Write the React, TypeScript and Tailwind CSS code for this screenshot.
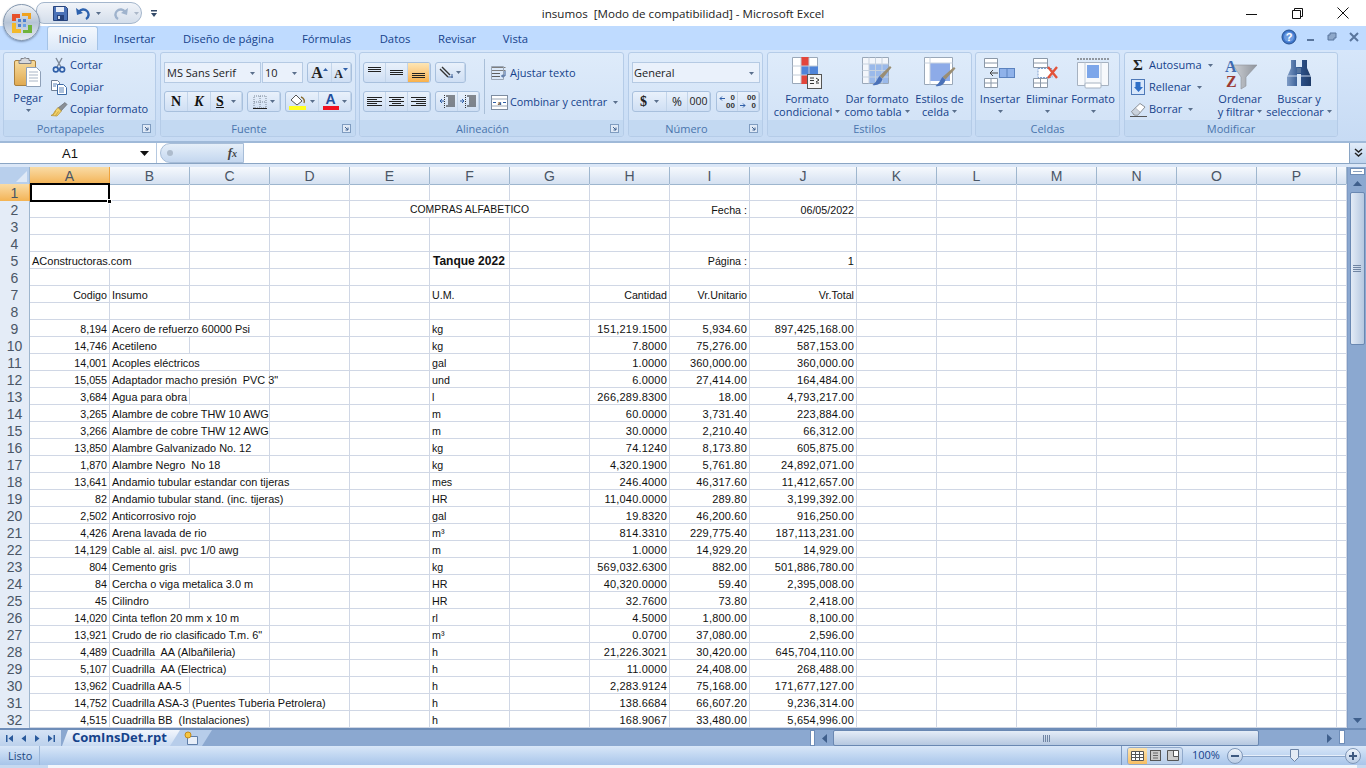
import React from 'react';

const UI = "font-['Open_Sans','Noto_Sans',sans-serif]";
const CELL = "font-['Liberation_Sans',Arial,sans-serif]";

type DataRow = { n: number; a: string; b: string; span: 1 | 2 | 3; f: string; h: string; i: string; j: string };

const raw: [string, string, 1 | 2 | 3, string, string, string, string][] = [
  ['8,194', 'Acero de refuerzo 60000 Psi', 2, 'kg', '151,219.1500', '5,934.60', '897,425,168.00'],
  ['14,746', 'Acetileno', 1, 'kg', '7.8000', '75,276.00', '587,153.00'],
  ['14,001', 'Acoples eléctricos', 2, 'gal', '1.0000', '360,000.00', '360,000.00'],
  ['15,055', 'Adaptador macho presión  PVC 3"', 2, 'und', '6.0000', '27,414.00', '164,484.00'],
  ['3,684', 'Agua para obra', 1, 'l', '266,289.8300', '18.00', '4,793,217.00'],
  ['3,265', 'Alambre de cobre THW 10 AWG', 2, 'm', '60.0000', '3,731.40', '223,884.00'],
  ['3,266', 'Alambre de cobre THW 12 AWG', 2, 'm', '30.0000', '2,210.40', '66,312.00'],
  ['13,850', 'Alambre Galvanizado No. 12', 2, 'kg', '74.1240', '8,173.80', '605,875.00'],
  ['1,870', 'Alambre Negro  No 18', 2, 'kg', '4,320.1900', '5,761.80', '24,892,071.00'],
  ['13,641', 'Andamio tubular estandar con tijeras', 3, 'mes', '246.4000', '46,317.60', '11,412,657.00'],
  ['82', 'Andamio tubular stand. (inc. tijeras)', 3, 'HR', '11,040.0000', '289.80', '3,199,392.00'],
  ['2,502', 'Anticorrosivo rojo', 2, 'gal', '19.8320', '46,200.60', '916,250.00'],
  ['4,426', 'Arena lavada de rio', 2, 'm³', '814.3310', '229,775.40', '187,113,231.00'],
  ['14,129', 'Cable al. aisl. pvc 1/0 awg', 2, 'm', '1.0000', '14,929.20', '14,929.00'],
  ['804', 'Cemento gris', 1, 'kg', '569,032.6300', '882.00', '501,886,780.00'],
  ['84', 'Cercha o viga metalica 3.0 m', 2, 'HR', '40,320.0000', '59.40', '2,395,008.00'],
  ['45', 'Cilindro', 1, 'HR', '32.7600', '73.80', '2,418.00'],
  ['14,020', 'Cinta teflon 20 mm x 10 m', 2, 'rl', '4.5000', '1,800.00', '8,100.00'],
  ['13,921', 'Crudo de rio clasificado T.m. 6"', 2, 'm³', '0.0700', '37,080.00', '2,596.00'],
  ['4,489', 'Cuadrilla  AA (Albañileria)', 2, 'h', '21,226.3021', '30,420.00', '645,704,110.00'],
  ['5,107', 'Cuadrilla  AA (Electrica)', 2, 'h', '11.0000', '24,408.00', '268,488.00'],
  ['13,962', 'Cuadrilla AA-5', 1, 'h', '2,283.9124', '75,168.00', '171,677,127.00'],
  ['14,752', 'Cuadrilla ASA-3 (Puentes Tuberia Petrolera)', 3, 'h', '138.6684', '66,607.20', '9,236,314.00'],
  ['4,515', 'Cuadrilla BB  (Instalaciones)', 2, 'h', '168.9067', '33,480.00', '5,654,996.00'],
];
const rows: DataRow[] = raw.map((r, idx) => ({ n: idx + 9, a: r[0], b: r[1], span: r[2], f: r[3], h: r[4], i: r[5], j: r[6] }));
const letters = ['A', 'B', 'C', 'D', 'E', 'F', 'G', 'H', 'I', 'J', 'K', 'L', 'M', 'N', 'O', 'P', ''];
const GRID = 'grid grid-cols-[30px_repeat(9,80px)_107px_repeat(6,80px)_10px] h-[17px]';
const LINE = 'border-r border-b border-[#d0d7e5] h-[17px] min-w-0';
const TXT = CELL + ' pt-[1px] leading-[16px] text-[#111] whitespace-nowrap';

function Caret({ className = '' }: { className?: string }) {
  return <svg width="5" height="3" viewBox="0 0 5 3" className={'shrink-0 ' + className}><path d="M0 0h5L2.5 3z" fill="#5a6f8c" /></svg>;
}

function Group({ title, w, launcher, children }: { title: string; w: string; launcher?: boolean; children: React.ReactNode }) {
  return (
    <section className={w + ' h-[85px] flex flex-col rounded-[3px] border border-[#b5cce8] bg-gradient-to-b from-[#deebfa] to-[#d0e1f6] overflow-hidden shrink-0'}>
      <div className="h-[67px] flex">{children}</div>
      <div className={'h-[16px] bg-[#c3d9f2] flex items-center relative ' + (launcher ? 'pr-[18px]' : '')}>
        <span className={UI + ' w-full text-center text-[11px] leading-[16px] pt-[1px] text-[#4a75ad]'}>{title}</span>
        {launcher && (
          <svg width="9" height="9" viewBox="0 0 9 9" className="absolute right-[4px] top-[4px]"><rect x=".5" y=".5" width="8" height="8" fill="#dfe9f6" stroke="#7f9cc0" /><path d="M3 3l3 3M6 3.5V6H3.5" stroke="#3f618f" fill="none" /></svg>
        )}
      </div>
    </section>
  );
}

function SmallRow({ icon, label, caret }: { icon: React.ReactNode; label: string; caret?: boolean }) {
  return (
    <div className="h-[22px] flex items-center">
      <span className="w-[18px] h-[16px] flex items-center justify-center shrink-0">{icon}</span>
      <span className={UI + ' ml-[2px] text-[11px] text-[#15428b] whitespace-nowrap'}>{label}</span>
      {caret && <Caret className="ml-[6px]" />}
    </div>
  );
}

function Large({ w, icon, l1, l2 }: { w: string; icon: React.ReactNode; l1: string; l2?: string }) {
  return (
    <div className={w + ' flex flex-col items-center shrink-0'}>
      <div className="h-[38px] flex items-center justify-center mt-[1px]">{icon}</div>
      <div className={UI + ' text-[11px] leading-[13px] text-[#15428b] text-center whitespace-nowrap'}>{l1}</div>
      <div className={UI + ' text-[11px] leading-[13px] text-[#15428b] flex items-center justify-center h-[13px] whitespace-nowrap'}>
        {l2}<Caret className={l2 ? 'ml-[3px]' : ''} />
      </div>
    </div>
  );
}

function Seg({ w, children }: { w: string; children: React.ReactNode }) {
  return <div className={w + ' h-[21px] flex rounded-[3px] border border-[#a8c0dd] bg-gradient-to-b from-[#e9f1fb] to-[#cfdff4] overflow-hidden shrink-0'}>{children}</div>;
}

function SegItem({ w, on, children }: { w: string; on?: boolean; children: React.ReactNode }) {
  return <div className={w + ' h-full flex items-center justify-center shrink-0 border-r border-[#c3d5ea] ' + (on ? 'bg-gradient-to-b from-[#fde6b5] to-[#f9b14a]' : '')}>{children}</div>;
}

function Lines({ rows: r }: { rows: [number, number, number][] }) {
  return <svg width="15" height="13" viewBox="0 0 15 13">{r.map(([x, w, y], k) => <rect key={k} x={x} y={y} width={w} height="1" fill="#222" />)}</svg>;
}

const Paste = (
  <svg width="30" height="32" viewBox="0 0 30 32">
    <defs><linearGradient id="pb" x1="0" y1="0" x2="0" y2="1"><stop offset="0" stopColor="#f7dc9f" /><stop offset="1" stopColor="#e0a950" /></linearGradient></defs>
    <rect x="1.5" y="4.5" width="21" height="25" rx="1.5" fill="url(#pb)" stroke="#a9803f" />
    <path d="M8 4.5V2.5h2.5a2 2 0 013 0H16v2h2v3H6v-3z" fill="#d7d9dd" stroke="#7d7f85" />
    <path d="M13.5 11.5h10l4 4v15h-14z" fill="#fff" stroke="#8ea0b8" />
    <path d="M16 16h9M16 19h9M16 22h9M16 25h9" stroke="#a9b5c6" />
  </svg>
);
const Scissors = (
  <svg width="14" height="16" viewBox="0 0 14 16">
    <path d="M4 1l5 9M10 1L5 10" stroke="#7e8a99" strokeWidth="1.4" fill="none" />
    <circle cx="3.8" cy="12.5" r="2.4" fill="none" stroke="#2f5fa8" strokeWidth="1.6" />
    <circle cx="10.2" cy="12.5" r="2.4" fill="none" stroke="#2f5fa8" strokeWidth="1.6" />
  </svg>
);
const Copy = (
  <svg width="16" height="15" viewBox="0 0 16 15">
    <path d="M.5.5h6l2 2v8h-8z" fill="#fff" stroke="#6f7f95" />
    <path d="M6.5 4.5h6l3 3v7h-9z" fill="#fff" stroke="#3d6aa5" />
    <path d="M2 4h4M2 6h3M8 8h5M8 10h5M8 12h5" stroke="#5b82b7" />
  </svg>
);
const Brush = (
  <svg width="18" height="15" viewBox="0 0 18 15">
    <path d="M8 6l7-5.5 2 2L11 9z" fill="#8a8f96" stroke="#5b5f66" strokeWidth=".6" />
    <path d="M8 5.5L11.5 9 7 14 1 13.5c2-1 3-2.5 4-4.5z" fill="#f3d36a" stroke="#ad8a2c" strokeWidth=".7" />
    <path d="M3 13l3-4M5.5 13.5l3-4" stroke="#b7902f" strokeWidth=".7" />
  </svg>
);
const GridBorder = (
  <svg width="14" height="14" viewBox="0 0 14 14">
    <path d="M1 1h12v12H1zM7 1v12M1 7h12" fill="none" stroke="#7a8797" strokeDasharray="1 1" />
    <path d="M0 13.5h14" stroke="#222" />
  </svg>
);
const Fill = (
  <svg width="18" height="17" viewBox="0 0 18 17">
    <path d="M2 7l5-5 6 6-5 4z" fill="#fff" stroke="#555" />
    <path d="M12 4c3 1 4 4 3 6" fill="none" stroke="#8a6d2c" strokeWidth="1.4" />
    <rect x="0" y="13" width="17" height="4" fill="#ffff20" />
  </svg>
);
const Wrap = (
  <svg width="17" height="15" viewBox="0 0 17 15">
    <path d="M.5 1.5h14M.5 4.5h14" stroke="#7e7e7e" />
    <path d="M1 7.5h8M1 10.5h8M1 13.5h6" stroke="#5f5f5f" />
    <path d="M.5.5h12v13H.5z" fill="none" stroke="#9aa6b5" />
    <path d="M14 5v5h-3M12 8.5L10.5 10l1.5 1.5" fill="none" stroke="#3c5f95" />
  </svg>
);
const Merge = (
  <svg width="17" height="15" viewBox="0 0 17 15">
    <rect x=".5" y=".5" width="16" height="14" fill="#fff" stroke="#7d8ca0" />
    <path d="M.5 4h16M.5 11h16" stroke="#9aa6b5" />
    <text x="8.5" y="10" textAnchor="middle" fontSize="7" fontWeight="700" fontFamily="Liberation Serif" fill="#333">a</text>
    <path d="M2 7.5h3M15 7.5h-3" stroke="#2f5fa8" />
  </svg>
);
const CondFmt = (
  <svg width="30" height="32" viewBox="0 0 30 32">
    <path d="M.5.5h25v26H.5z" fill="#fff" stroke="#9aa8b9" />
    <rect x="9" y="0" width="8" height="9" fill="#e2453b" /><rect x="9" y="9" width="17" height="9" fill="#4f84d9" />
    <rect x="9" y="18" width="8" height="9" fill="#e2453b" />
    <path d="M9 .5v26M17 .5v26M.5 9h25M.5 18h25" stroke="#c2ccd8" fill="none" />
    <rect x="15.5" y="17.5" width="14" height="14" fill="#f4f4f4" stroke="#555" />
    <path d="M18 21h4M18 23.5h4M18 26.5h4M24 21l3 2-3 2M24 26h3" stroke="#333" fill="none" />
  </svg>
);
const TableFmt = (
  <svg width="30" height="32" viewBox="0 0 30 32">
    <path d="M.5.5h26v26H.5z" fill="#f3f6fb" stroke="#9aa8b9" />
    <rect x="7" y="7" width="19" height="19" fill="#9ab9ea" />
    <path d="M7 .5v26M13.5 .5v26M20 .5v26M.5 7h26M.5 13.5h26M.5 20h26" stroke="#c7d2df" fill="none" />
    <path d="M28 9l1.5 1.5-9 11-3-2.5z" fill="#9a8d72" /><path d="M17.5 19c-2 2-2 5-7 9 5 1 9-2 10-6z" fill="#4a71b8" />
  </svg>
);
const CellStyle = (
  <svg width="32" height="32" viewBox="0 0 32 32">
    <path d="M.5.5h28v27H.5z" fill="#fff" stroke="#9aa8b9" />
    <rect x="6" y="6" width="20" height="18" fill="#8dabe8" />
    <path d="M6 .5v27M.5 6h28" stroke="#c7d2df" fill="none" />
    <path d="M30 10l1.5 1.5-10 11-3-2.5z" fill="#9a8d72" /><path d="M18.5 20c-2 2-2 5-7 9 5 1 9-2 10-6z" fill="#4a71b8" />
  </svg>
);
const InsertCell = (
  <svg width="32" height="30" viewBox="0 0 32 30">
    <path d="M.5.5h13v9H.5zM.5 5h13M.5 20.5h13v9H.5zM.5 25h13M7 20.5v9" fill="#fff" stroke="#8b98a8" />
    <rect x="15.5" y="10.5" width="15" height="9" fill="#8fb2ea" stroke="#5a82bf" /><path d="M23 10.5v9" stroke="#5a82bf" />
    <path d="M14 15H6M9 12l-3 3 3 3" fill="none" stroke="#444" />
  </svg>
);
const DeleteCell = (
  <svg width="28" height="30" viewBox="0 0 28 30">
    <path d="M.5.5h14v9H.5zM.5 5h14M.5 20.5h14v9H.5zM.5 25h14M7.5 20.5v9" fill="#fff" stroke="#8b98a8" />
    <path d="M5 10.5h14v9H5z" fill="#fff" stroke="#7f9fcd" strokeDasharray="2 1" />
    <path d="M15 9l9 11M24 9l-9 11" stroke="#e2533a" strokeWidth="2.4" />
  </svg>
);
const FormatCell = (
  <svg width="32" height="32" viewBox="0 0 32 32">
    <path d="M.5 5.5h31v23H.5z" fill="#f7f9fc" stroke="#a6b2c1" />
    <path d="M8 5.5v23M24 5.5v23" stroke="#c0cbd8" /><rect x="10" y="8" width="12" height="13" fill="#7ca6ea" />
    <path d="M0 2h32" stroke="#444" strokeDasharray="2 1" /><rect x="8" y="26" width="16" height="5" rx="1" fill="#fff" stroke="#a6b2c1" />
  </svg>
);
const FillDown = (
  <svg width="15" height="16" viewBox="0 0 15 16"><rect x=".5" y=".5" width="13" height="15" fill="#d8e7fb" stroke="#4e79b8" /><path d="M4.5 3h5v5H12l-4.5 5L3 8h1.5z" fill="#2f6fc7" /></svg>
);
const Eraser = (
  <svg width="17" height="15" viewBox="0 0 17 15"><path d="M10 1.5l5 3.5-7 8H4L1.5 9.5z" fill="#fff" stroke="#8a8f96" /><path d="M1.5 9.5L5 13h3l2-3-4.5-4z" fill="#cbd3dd" stroke="#8a8f96" strokeWidth=".5" /><path d="M0 14.5h17" stroke="#555" /></svg>
);
const Sort = (
  <svg width="33" height="34" viewBox="0 -4 33 34">
    <defs><linearGradient id="fu" x1="0" y1="0" x2="1" y2="0"><stop offset="0" stopColor="#cdd0d5" /><stop offset="1" stopColor="#8f949c" /></linearGradient></defs>
    <path d="M9 5h24L22 17v9l-5 3V17z" fill="url(#fu)" stroke="#8d9198" strokeWidth=".6" />
    <text fontSize="16" fontWeight="700" fontFamily="Liberation Serif">
      <tspan x="1" y="12" fill="#3f6bb1">A</tspan>
      <tspan x="2" dy="15" fill="#9b3a33">Z</tspan>
    </text>
  </svg>
);
const Binoculars = (
  <svg width="28" height="28" viewBox="0 0 28 28">
    <defs><linearGradient id="bi" x1="0" y1="0" x2="1" y2="0"><stop offset="0" stopColor="#7f9cc6" /><stop offset=".5" stopColor="#30568f" /><stop offset="1" stopColor="#1e3b68" /></linearGradient></defs>
    <path d="M6 1h5v7h6V1h5v8l4 9v9H16V15h-4v12H2v-9l4-9z" fill="url(#bi)" />
    <path d="M2 17h10M16 17h10" stroke="#c5d4ea" /><rect x="12" y="9" width="4" height="5" fill="#56759f" />
  </svg>
);

function OfficeButton() {
  return (
    <div className="absolute left-[3px] top-[4px] w-[37px] h-[37px] rounded-full bg-gradient-to-b from-[#f3f5f8] via-[#b6c4d6] to-[#e5eaf1] border border-[#8296ae] flex items-center justify-center z-10 shadow-[0_1px_2px_rgba(60,80,110,0.5)]">
      <svg width="24" height="24" viewBox="0 0 24 24">
        <path d="M2 3h8v4H6v3H2z" fill="#e6502a" /><path d="M12 2h9v6h-3V5h-6z" fill="#f0a21e" />
        <path d="M2 12h4v6h5v4H2z" fill="#f3b92a" /><path d="M13 19h5v-5h4v8h-9z" fill="#6fb33a" />
        <rect x="8" y="8" width="3" height="3" fill="#4c7fd0" /><rect x="13" y="8" width="3" height="3" fill="#4c7fd0" /><rect x="8" y="13" width="3" height="3" fill="#4c7fd0" /><rect x="13" y="13" width="3" height="3" fill="#6aa2e8" />
      </svg>
    </div>
  );
}

function TitleBar() {
  return (
    <div className="h-[26px] bg-white grid grid-cols-[1fr_auto_1fr] items-start shrink-0">
      <div className="flex items-center h-[24px] pt-[2px]">
        <div className="ml-[36px] w-[106px] h-[22px] rounded-r-[11px] rounded-l-[8px] border border-[#a4b6cc] bg-gradient-to-b from-[#f1f4f9] to-[#d4deeb] flex items-center pl-[16px]">
          <svg width="15" height="15" viewBox="0 0 15 15"><path d="M.5.5h12l2 2v12H.5z" fill="#4b72b8" stroke="#28447c" /><rect x="3" y="1" width="8" height="5" fill="#e9eef7" /><rect x="4" y="9" width="7" height="5.5" fill="#27427b" /><rect x="5" y="10" width="2" height="3" fill="#cfd9ea" /></svg>
          <svg width="14" height="14" viewBox="0 0 14 14" className="ml-[8px]"><path d="M3 6a5 5 0 018-1 5 5 0 01-1 8" fill="none" stroke="#2d62ae" strokeWidth="2.4" /><path d="M0 2l1 7 6-2z" fill="#2d62ae" /></svg>
          <Caret className="ml-[6px]" />
          <svg width="14" height="14" viewBox="0 0 14 14" className="ml-[13px]"><path d="M11 6a5 5 0 00-8-1 5 5 0 001 8" fill="none" stroke="#9fb3cd" strokeWidth="2.4" /><path d="M14 2l-1 7-6-2z" fill="#9fb3cd" /></svg>
          <Caret className="ml-[6px] opacity-40" />
        </div>
        <svg width="6" height="7" viewBox="0 0 6 7" className="ml-[9px]"><path d="M0 0h6v1.5H0zM0 3h6L3 7z" fill="#344a68" /></svg>
      </div>
      <div className={UI + ' text-[11.6px] leading-[28px] text-[#222] whitespace-pre'}>insumos  [Modo de compatibilidad] - Microsoft Excel</div>
      <div className="flex justify-end h-[26px]">
        <div className="w-[46px] flex items-center justify-center"><svg width="11" height="11" viewBox="0 0 11 11"><path d="M0 6.5h11" stroke="#111" /></svg></div>
        <div className="w-[46px] flex items-center justify-center"><svg width="11" height="11" viewBox="0 0 11 11"><path d="M.5 2.5h8v8h-8zM2.5 2.5v-2h8v8h-2" fill="none" stroke="#111" /></svg></div>
        <div className="w-[46px] flex items-center justify-center"><svg width="12" height="12" viewBox="0 0 12 12"><path d="M.5.5l11 11M11.5.5l-11 11" stroke="#111" /></svg></div>
      </div>
    </div>
  );
}

function Tabs() {
  const items: [string, string][] = [['Insertar', 'ml-[17px] w-[39px]'], ['Diseño de página', 'ml-[29px] w-[91px]'], ['Fórmulas', 'ml-[29px] w-[47px]'], ['Datos', 'ml-[30px] w-[30px]'], ['Revisar', 'ml-[29px] w-[36px]'], ['Vista', 'ml-[28px] w-[25px]']];
  return (
    <div className="h-[24px] bg-[#bfdbff] flex shrink-0 relative">
      <div className={UI + ' ml-[47px] w-[51px] h-[24px] rounded-t-[3px] border border-b-0 border-[#a4c3e6] bg-gradient-to-b from-[#f4f8fd] to-[#dbe8f8] text-[11.3px] leading-[24px] text-center text-[#15428b]'}>Inicio</div>
      {items.map(([t, c]) => (
        <div key={t} className={UI + ' ' + c + ' text-[11.3px] leading-[26px] text-[#15428b] text-center whitespace-nowrap flex justify-center'}>{t}</div>
      ))}
      <div className="ml-auto flex items-center pb-[2px]">
        <svg width="16" height="16" viewBox="0 0 16 16"><circle cx="8" cy="8" r="7" fill="#3e76cc" stroke="#26508f" /><circle cx="8" cy="8" r="5" fill="#6d9be0" /><text x="8" y="12" textAnchor="middle" fontSize="11" fontWeight="700" fontFamily="Liberation Sans" fill="#fff">?</text></svg>
        <svg width="10" height="10" viewBox="0 0 10 10" className="ml-[9px]"><path d="M1 8h7" stroke="#59759c" strokeWidth="2" /></svg>
        <svg width="10" height="10" viewBox="0 0 10 10" className="ml-[11px]"><path d="M3 1h6v5H7v2H1V3h2z" fill="#8da7c9" stroke="#59759c" /></svg>
        <svg width="10" height="10" viewBox="0 0 10 10" className="ml-[12px] mr-[7px]"><path d="M1 1l8 8M9 1l-8 8" stroke="#59759c" strokeWidth="2" /></svg>
      </div>
    </div>
  );
}

function Ribbon() {
  return (
    <div className="h-[93px] pt-[2px] flex bg-gradient-to-b from-[#d6e6fa] to-[#c7dbf4] border-b-[2px] border-[#9fb9d8] shrink-0">
      <div className="ml-[3px]" />
      <Group title="Portapapeles" w="w-[153px]" launcher>
        <div className="w-[46px] flex flex-col items-center pl-[2px] shrink-0">
          <div className="h-[36px] flex items-center mt-[1px]">{Paste}</div>
          <span className={UI + ' text-[11px] leading-[16px] text-[#15428b]'}>Pegar</span>
          <Caret className="mt-[3px]" />
        </div>
        <div className="pt-[1px]">
          <SmallRow icon={Scissors} label="Cortar" />
          <SmallRow icon={Copy} label="Copiar" />
          <SmallRow icon={Brush} label="Copiar formato" />
        </div>
      </Group>
      <div className="ml-[4px]" />
      <Group title="Fuente" w="w-[196px]" launcher>
        <div className="pl-[3px] pt-[9px] flex flex-col gap-[8px]">
          <div className="flex">
            <div className="w-[97px] h-[21px] bg-[#eaf1fb] border border-[#b5cae3] flex items-center justify-between pl-[2px] pr-[5px] pt-[1px] shrink-0">
              <span className={UI + ' text-[11px] text-[#222] whitespace-nowrap'}>MS Sans Serif</span><Caret />
            </div>
            <div className="ml-[1px] w-[41px] h-[21px] bg-[#eaf1fb] border border-[#b5cae3] flex items-center justify-between pl-[2px] pr-[5px] pt-[1px] shrink-0">
              <span className={UI + ' text-[11px] text-[#222]'}>10</span><Caret />
            </div>
            <div className="ml-[4px]">
              <Seg w="w-[45px]">
                <SegItem w="w-[24px]"><span className="font-['Liberation_Serif',serif] font-bold text-[16px] text-[#222]">A</span><svg width="5" height="3" viewBox="0 0 5 3" className="mb-[7px]"><path d="M0 3h5L2.5 0z" fill="#2f5fa8" /></svg></SegItem>
                <SegItem w="w-[19px]"><span className="font-['Liberation_Serif',serif] font-bold text-[12px] text-[#222] mt-[2px]">A</span><svg width="5" height="3" viewBox="0 0 5 3" className="mb-[7px]"><path d="M0 0h5L2.5 3z" fill="#2f5fa8" /></svg></SegItem>
              </Seg>
            </div>
          </div>
          <div className="flex gap-[4px]">
            <Seg w="w-[79px]">
              <SegItem w="w-[23px]"><span className="font-['Liberation_Serif',serif] font-bold text-[14px] text-[#111]">N</span></SegItem>
              <SegItem w="w-[23px]"><span className="font-['Liberation_Serif',serif] font-bold italic text-[14px] text-[#111]">K</span></SegItem>
              <SegItem w="w-[31px]"><span className="font-['Liberation_Serif',serif] font-bold underline text-[14px] text-[#111]">S</span><Caret className="ml-[7px]" /></SegItem>
            </Seg>
            <Seg w="w-[34px]"><SegItem w="w-[32px]">{GridBorder}<Caret className="ml-[3px]" /></SegItem></Seg>
            <Seg w="w-[67px]">
              <SegItem w="w-[33px]">{Fill}<Caret className="ml-[3px]" /></SegItem>
              <SegItem w="w-[32px]">
                <span className="flex flex-col items-center w-[16px] h-[17px]">
                  <span className="font-['Liberation_Sans',sans-serif] font-bold text-[14px] leading-[13px] text-[#1f4e9c]">A</span>
                  <span className="w-[16px] h-[4px] bg-[#f01020]" />
                </span>
                <Caret className="ml-[3px]" />
              </SegItem>
            </Seg>
          </div>
        </div>
      </Group>
      <div className="ml-[3px]" />
      <Group title="Alineación" w="w-[265px]" launcher>
        <div className="pl-[3px] pt-[9px] w-[124px] flex flex-col gap-[8px] shrink-0">
          <div className="flex gap-[4px]">
            <Seg w="w-[68px]">
              <SegItem w="w-[22px]"><Lines rows={[[1, 13, 1], [1, 13, 3], [1, 13, 5]]} /></SegItem>
              <SegItem w="w-[22px]"><Lines rows={[[1, 13, 4], [1, 13, 6], [1, 13, 8]]} /></SegItem>
              <SegItem w="w-[22px]" on><Lines rows={[[1, 13, 7], [1, 13, 9], [1, 13, 11]]} /></SegItem>
            </Seg>
            <Seg w="w-[31px]"><SegItem w="w-[29px]"><svg width="15" height="14" viewBox="0 0 15 14"><path d="M1 3l8 8M3 1l8 8" stroke="#333" strokeWidth="1.4" /><path d="M9 11h5M13 8v4" stroke="#3c5f95" fill="none" /></svg><Caret className="ml-[2px]" /></SegItem></Seg>
          </div>
          <div className="flex gap-[4px]">
            <Seg w="w-[68px]">
              <SegItem w="w-[22px]"><Lines rows={[[0, 15, 2], [0, 10, 4], [0, 15, 6], [0, 10, 8], [0, 15, 10]]} /></SegItem>
              <SegItem w="w-[22px]"><Lines rows={[[0, 15, 2], [3, 9, 4], [0, 15, 6], [3, 9, 8], [0, 15, 10]]} /></SegItem>
              <SegItem w="w-[22px]"><Lines rows={[[0, 15, 2], [5, 10, 4], [0, 15, 6], [5, 10, 8], [0, 15, 10]]} /></SegItem>
            </Seg>
            <Seg w="w-[45px]">
              <SegItem w="w-[22px]"><svg width="16" height="13" viewBox="0 0 16 13" fill="none"><path d="M7 1h9M9 3h7M9 5h7M9 7h7M9 9h7M7 11h9" stroke="#222" /><path d="M5.5 0v13" stroke="#333" strokeDasharray="1 1" /><path d="M5 6H1M3 4L1 6l2 2" stroke="#2f5fa8" /></svg></SegItem>
              <SegItem w="w-[21px]"><svg width="16" height="13" viewBox="0 0 16 13" fill="none"><path d="M7 1h9M9 3h7M9 5h7M9 7h7M9 9h7M7 11h9" stroke="#222" /><path d="M5.5 0v13" stroke="#333" strokeDasharray="1 1" /><path d="M0 6h4M2 4l2 2-2 2" stroke="#2f5fa8" /></svg></SegItem>
            </Seg>
          </div>
        </div>
        <div className="w-px h-[55px] mt-[6px] bg-[#a9bfd8] shrink-0" />
        <div className="pl-[6px] pt-[10px] flex flex-col gap-[8px]">
          <div className="h-[21px] flex items-center">{Wrap}<span className={UI + ' ml-[2px] text-[11px] text-[#15428b] whitespace-nowrap'}>Ajustar texto</span></div>
          <div className="h-[21px] flex items-center">{Merge}<span className={UI + ' ml-[2px] text-[10.8px] text-[#15428b] whitespace-nowrap'}>Combinar y centrar</span><Caret className="ml-[6px]" /></div>
        </div>
      </Group>
      <div className="ml-[4px]" />
      <Group title="Número" w="w-[135px]" launcher>
        <div className="pl-[3px] pt-[9px] flex flex-col gap-[8px]">
          <div className="w-[128px] h-[21px] bg-[#eaf1fb] border border-[#b5cae3] flex items-center justify-between pl-[1px] pr-[5px] pt-[1px]">
            <span className={UI + ' text-[11px] text-[#222]'}>General</span><Caret />
          </div>
          <div className="flex gap-[5px]">
            <Seg w="w-[79px]">
              <SegItem w="w-[34px]"><span className="font-['Liberation_Serif',serif] font-bold text-[14px] text-[#222]">$</span><Caret className="ml-[7px]" /></SegItem>
              <SegItem w="w-[21px]"><span className={UI + ' text-[12px] text-[#222]'}>%</span></SegItem>
              <SegItem w="w-[22px]"><span className={UI + ' text-[10.5px] text-[#222]'}>000</span></SegItem>
            </Seg>
            <Seg w="w-[44px]">
              <SegItem w="w-[21px]">
                <svg width="6" height="16" viewBox="0 0 6 16" className="shrink-0"><path d="M6 4.5H1M3 2.5l-2 2 2 2" stroke="#2f5fa8" fill="none" /></svg>
                <span className="flex flex-col items-end w-[10px] text-[#333] font-['Liberation_Sans',sans-serif] font-bold text-[8px] leading-[8px]"><span>0</span><span>00</span></span>
              </SegItem>
              <SegItem w="w-[21px]">
                <svg width="6" height="16" viewBox="0 0 6 16" className="shrink-0"><path d="M0 11.5h5M3 9.5l2 2-2 2" stroke="#2f5fa8" fill="none" /></svg>
                <span className="flex flex-col items-end w-[10px] text-[#333] font-['Liberation_Sans',sans-serif] font-bold text-[8px] leading-[8px]"><span>00</span><span>0</span></span>
              </SegItem>
            </Seg>
          </div>
        </div>
      </Group>
      <div className="ml-[4px]" />
      <Group title="Estilos" w="w-[205px]">
        <Large w="w-[78px]" icon={CondFmt} l1="Formato" l2="condicional" />
        <Large w="w-[62px]" icon={TableFmt} l1="Dar formato" l2="como tabla" />
        <Large w="w-[63px]" icon={CellStyle} l1="Estilos de" l2="celda" />
      </Group>
      <div className="ml-[3px]" />
      <Group title="Celdas" w="w-[145px]">
        <Large w="w-[48px]" icon={InsertCell} l1="Insertar" />
        <Large w="w-[46px]" icon={DeleteCell} l1="Eliminar" />
        <Large w="w-[46px]" icon={FormatCell} l1="Formato" />
      </Group>
      <div className="ml-[4px]" />
      <Group title="Modificar" w="w-[214px]">
        <div className="w-[91px] pl-[4px] pt-[1px] shrink-0">
          <SmallRow icon={<span className="font-['Liberation_Serif',serif] font-bold text-[15px] leading-none text-[#222]">Σ</span>} label="Autosuma" caret />
          <SmallRow icon={FillDown} label="Rellenar" caret />
          <SmallRow icon={Eraser} label="Borrar" caret />
        </div>
        <Large w="w-[48px]" icon={Sort} l1="Ordenar" l2="y filtrar" />
        <Large w="w-[70px]" icon={Binoculars} l1="Buscar y" l2="seleccionar" />
      </Group>
    </div>
  );
}

function FormulaBar() {
  return (
    <div className="h-[24px] bg-[#dbe7f7] shrink-0">
      <div className="h-[21px] flex border-b border-[#8aa5c4] bg-white">
        <div className={CELL + ' w-[157px] flex items-center shrink-0 border-r border-[#b6c9e0] pl-[62px] pr-[7px] pt-[1px] justify-between text-[13px] text-[#111]'}>
          A1<svg width="9" height="5" viewBox="0 0 9 5"><path d="M0 0h9L4.5 5z" fill="#111" /></svg>
        </div>
        <div className="ml-[3px] w-[84px] rounded-l-[10px] border border-[#a7bdd8] bg-gradient-to-b from-[#e6eff9] to-[#c4d7ef] flex items-center justify-between pl-[6px] pr-[6px] shrink-0">
          <span className="w-[6px] h-[6px] rounded-full bg-[#aebccd]" />
          <span className="font-['Liberation_Serif',serif] italic font-bold text-[13px] text-[#444]">f<span className="text-[10px]">x</span></span>
        </div>
        <div className="flex-1" />
        <div className="w-[17px] bg-gradient-to-b from-[#e2ecf9] to-[#bcd2ed] border-l border-[#8aa5c4] flex items-center justify-center shrink-0">
          <svg width="9" height="10" viewBox="0 0 9 10"><path d="M1 1l3.5 3L8 1M1 5l3.5 3L8 5" fill="none" stroke="#222" strokeWidth="1.5" /></svg>
        </div>
      </div>
    </div>
  );
}

function Sheet() {
  return (
    <div className="w-[1347px] shrink-0">
      <div className={GRID}>
        <div className="bg-[#b8cfec] border-r border-b border-[#9eb6ce] flex items-end justify-end p-[2px]">
          <svg width="11" height="11" viewBox="0 0 11 11"><path d="M11 0v11H0z" fill="#dfe9f6" /></svg>
        </div>
        {letters.map((l, k) => (
          <div key={k} className={(k === 0 ? 'bg-gradient-to-b from-[#f9dca5] to-[#f3b353] border-[#f0a33c] ' : 'bg-gradient-to-b from-[#f6f9fd] to-[#d5e1f1] border-[#9eb6ce] ') + CELL + ' border-r border-b text-center text-[14px] font-light leading-[16px] pt-[1px] text-[#4a5666]'}>{l}</div>
        ))}
      </div>
      <Row n={1} selected />
      <Row n={2} center="COMPRAS ALFABETICO" i="Fecha :" j="06/05/2022" />
      <Row n={3} />
      <Row n={4} />
      <Row n={5} a="AConstructoras.com" aLeft f="Tanque 2022" fBold i="Página :" j="1" />
      <Row n={6} />
      <Row n={7} a="Codigo" b="Insumo" span={1} f="U.M." h="Cantidad" i="Vr.Unitario" j="Vr.Total" />
      <Row n={8} />
      {rows.map((r) => <Row key={r.n} n={r.n} a={r.a} b={r.b} span={r.span} f={r.f} h={r.h} i={r.i} j={r.j} />)}
    </div>
  );
}

function Row({ n, a, aLeft, b, span = 1, center, f, fBold, h, i, j, selected }: {
  n: number; a?: string; aLeft?: boolean; b?: string; span?: 1 | 2 | 3; center?: string; f?: string; fBold?: boolean; h?: string; i?: string; j?: string; selected?: boolean;
}) {
  const blank = (k: string) => <div key={k} className={LINE} />;
  const right = (t?: string, codigo?: boolean) => {
    const isNum = !!t && /^[\d,.]+$/.test(t);
    const size = codigo ? 'text-[10.7px]' : isNum ? 'text-[11px] tracking-[0.2px]' : 'text-[10.7px]';
    return <div className={LINE + ' ' + TXT + ' ' + size + ' text-right pr-[2px]'}>{t}</div>;
  };
  return (
    <div className={GRID}>
      <div className={(selected ? 'bg-gradient-to-b from-[#f9dca5] to-[#f3b353] border-[#f0a33c] ' : 'bg-[#e4ecf7] border-[#9eb6ce] ') + CELL + ' border-r border-b text-center text-[14px] font-light leading-[16px] pt-[1px] text-[#4a5666]'}>{n}</div>
      {aLeft
        ? <div className={'col-span-2 ' + LINE + ' ' + TXT + ' text-[11px] pl-[2px]'}>{a}</div>
        : selected
          ? <div className={LINE + ' relative'}><div className="absolute left-0 top-[-1px] w-[80px] h-[19px] border-2 border-black z-10" /><div className="absolute left-[77px] top-[15px] w-[5px] h-[5px] bg-black border border-white z-20" /></div>
          : right(a, true)}
      {!aLeft && (
        <div className={(span === 3 ? 'col-span-3' : span === 2 ? 'col-span-2' : '') + ' ' + LINE + ' ' + TXT + ' text-[10.9px] pl-[2px] whitespace-pre'}>{b}</div>
      )}
      {!aLeft && span === 1 && blank('c')}
      {!aLeft && span !== 3 && blank('d')}
      {aLeft && blank('c2')}
      {aLeft && blank('d2')}
      {center ? (
        <div className={'col-span-3 ' + LINE + ' ' + TXT + ' text-[10.4px] text-center'}>{center}</div>
      ) : (
        <>
          {blank('e')}
          <div className={LINE + ' ' + TXT + ' ' + (fBold ? 'font-bold text-[12px] pl-[3px]' : 'text-[10.7px] pl-[2px]')}>{f}</div>
          {blank('g')}
        </>
      )}
      {right(h)}
      {right(i)}
      {right(j)}
      {['k', 'l', 'm', 'n', 'o', 'p', 'q'].map(blank)}
    </div>
  );
}

function VScroll() {
  return (
    <div className="w-[19px] shrink-0 bg-[#8ba8d0] flex flex-col items-center border-l border-[#7f9bc4]">
      <div className="mt-[1px] w-[15px] h-[7px] border border-[#6f8db6] bg-white flex items-center justify-center"><span className="w-[9px] h-px bg-[#8aa0be]" /></div>
      <div className="h-[17px] flex items-center justify-center shrink-0"><svg width="9" height="5" viewBox="0 0 9 5"><path d="M4.5 0L9 5H0z" fill="#3f5f8c" /></svg></div>
      <div className="w-[15px] h-[153px] rounded-[2px] border border-[#6a88b2] bg-gradient-to-r from-[#e3ebf6] to-[#b6c8e0] flex flex-col items-center justify-center gap-px shrink-0">
        <span className="w-[8px] h-px bg-[#7085a3]" /><span className="w-[8px] h-px bg-[#7085a3]" /><span className="w-[8px] h-px bg-[#7085a3]" /><span className="w-[8px] h-px bg-[#7085a3]" />
      </div>
      <div className="flex-1" />
      <div className="h-[16px] flex items-center justify-center shrink-0"><svg width="9" height="5" viewBox="0 0 9 5"><path d="M0 0h9L4.5 5z" fill="#3f5f8c" /></svg></div>
    </div>
  );
}

function NavArrow({ d }: { d: string }) {
  return <svg width="9" height="9" viewBox="0 0 9 9" className="shrink-0"><path d={d} fill="#2a5a9c" /></svg>;
}

function SheetTabs() {
  return (
    <div className="h-[18px] flex bg-[#8ba8d0] border-t-2 border-[#6e8db8] shrink-0">
      <div className="w-[62px] flex items-center justify-between px-[5px] bg-gradient-to-b from-[#d5e3f5] to-[#bcd1ec] border-r border-[#8ba8d0] shrink-0">
        <NavArrow d="M1 1h1.5v7H1zM8 1v7L3.5 4.5z" />
        <NavArrow d="M7 1v7L2.5 4.5z" />
        <NavArrow d="M2 1v7l4.5-3.5z" />
        <NavArrow d="M1 1v7l4.5-3.5zM6.5 1H8v7H6.5z" />
      </div>
      <div className={UI + ' w-[118px] bg-gradient-to-b from-[#f2f6fc] to-[#c9dbf2] pl-[10px] font-bold text-[13px] leading-[15px] text-[#15428b] shrink-0 [clip-path:polygon(6px_0,100%_0,100%_100%,0_100%)] whitespace-nowrap'}>ComInsDet.rpt</div>
      <div className="-ml-[10px] w-[42px] h-full bg-[#b7cdea] flex items-center justify-center shrink-0 [clip-path:polygon(10px_0,100%_0,32px_100%,0_100%)]">
        <svg width="14" height="14" viewBox="0 0 14 14"><path d="M3.5 5.5h10v8h-10z" fill="#e7eef8" stroke="#5f7ea8" /><circle cx="4" cy="4" r="3" fill="#f4c542" stroke="#c58a19" /></svg>
      </div>
      <div className="flex-1" />
      <div className="w-[5px] bg-white border border-[#6e8db8] shrink-0" />
      <div className="w-[18px] flex items-center justify-center shrink-0"><svg width="5" height="9" viewBox="0 0 5 9"><path d="M5 0v9L0 4.5z" fill="#3f5f8c" /></svg></div>
      <div className="w-[426px] rounded-[2px] border border-[#6a88b2] bg-gradient-to-b from-[#e5edf7] to-[#b6c8e0] flex items-center justify-center gap-px shrink-0">
        <span className="h-[7px] w-px bg-[#7085a3]" /><span className="h-[7px] w-px bg-[#7085a3]" /><span className="h-[7px] w-px bg-[#7085a3]" /><span className="h-[7px] w-px bg-[#7085a3]" />
      </div>
      <div className="w-[68px] shrink-0" />
      <svg width="5" height="9" viewBox="0 0 5 9" className="self-center shrink-0"><path d="M0 0v9l5-4.5z" fill="#3f5f8c" /></svg>
      <div className="ml-[7px] w-[6px] h-[14px] bg-white border border-[#6e8db8] shrink-0" />
      <div className="w-[21px] shrink-0" />
    </div>
  );
}

function StatusBar() {
  return (
    <div className="h-[22px] flex flex-col shrink-0">
      <div className="h-[19px] flex items-center bg-gradient-to-b from-[#d9e7f8] via-[#c0d6f1] to-[#a8c5ea]">
        <div className={UI + ' w-[40px] pl-[8px] text-[11px] text-[#21477f] border-r border-[#9db8da] leading-[19px] shrink-0'}>Listo</div>
        <div className="flex-1" />
        <div className="w-[1px] h-[19px] bg-[#7d98bd] shrink-0" />
        <div className="ml-[5px] w-[56px] h-[18px] rounded-[3px] border border-[#90a9cb] bg-gradient-to-b from-[#d2e0f2] to-[#b9cee9] flex shrink-0 overflow-hidden">
          <div className="w-[19px] bg-gradient-to-b from-[#fde3ad] to-[#f7bf63] flex items-center justify-center"><svg width="13" height="10" viewBox="0 0 13 10"><path d="M.5.5h12v9H.5zM.5 3.5h12M.5 6.5h12M4.5.5v9M8.5.5v9" fill="#fff" stroke="#555" /></svg></div>
          <div className="w-[18px] flex items-center justify-center"><svg width="11" height="11" viewBox="0 0 11 11"><rect x=".5" y=".5" width="10" height="10" fill="#ccc" stroke="#555" /><path d="M3 3h5M3 5.5h5M3 8h5" stroke="#666" /></svg></div>
          <div className="w-[18px] flex items-center justify-center"><svg width="12" height="11" viewBox="0 0 12 11"><path d="M.5.5h11v10H.5z" fill="#ccc" stroke="#555" /><path d="M6.5.5v6M6.5 6.5h5" stroke="#555" /><rect x="7" y="1" width="4" height="5" fill="#fff" /></svg></div>
        </div>
        <span className={UI + ' ml-[9px] w-[26px] text-[11px] text-[#15428b] shrink-0'}>100%</span>
        <div className="ml-[9px] w-[16px] h-[16px] rounded-full border border-[#7f97b8] bg-gradient-to-b from-[#f0f5fb] to-[#b9cce6] flex items-center justify-center shrink-0"><span className="w-[8px] h-[2px] bg-[#3f5a80]" /></div>
        <div className="w-[47px] h-[2px] bg-[#e7effa] border-b border-[#8aa5c9] shrink-0" />
        <svg width="9" height="13" viewBox="0 0 9 13" className="shrink-0"><path d="M.5.5h8v8L4.5 12.5.5 8.5z" fill="#e3ebf5" stroke="#6a83a6" /></svg>
        <div className="w-[46px] h-[2px] bg-[#e7effa] border-b border-[#8aa5c9] shrink-0" />
        <div className="w-[16px] h-[16px] rounded-full border border-[#7f97b8] bg-gradient-to-b from-[#f0f5fb] to-[#b9cce6] flex items-center justify-center relative shrink-0 mr-[5px]"><span className="w-[8px] h-[2px] bg-[#3f5a80]" /><span className="absolute w-[2px] h-[8px] bg-[#3f5a80]" /></div>
      </div>
      <div className="h-[3px] bg-[#c7d9f0] pl-[48px] pr-[9px]"><div className="h-full bg-[#f3f6fb]" /></div>
    </div>
  );
}

export default function App() {
  return (
    <div className="w-[1366px] h-[768px] overflow-hidden relative flex flex-col bg-white">
      <OfficeButton />
      <TitleBar />
      <Tabs />
      <Ribbon />
      <FormulaBar />
      <div className="h-[561px] flex shrink-0">
        <Sheet />
        <VScroll />
      </div>
      <SheetTabs />
      <StatusBar />
    </div>
  );
}
